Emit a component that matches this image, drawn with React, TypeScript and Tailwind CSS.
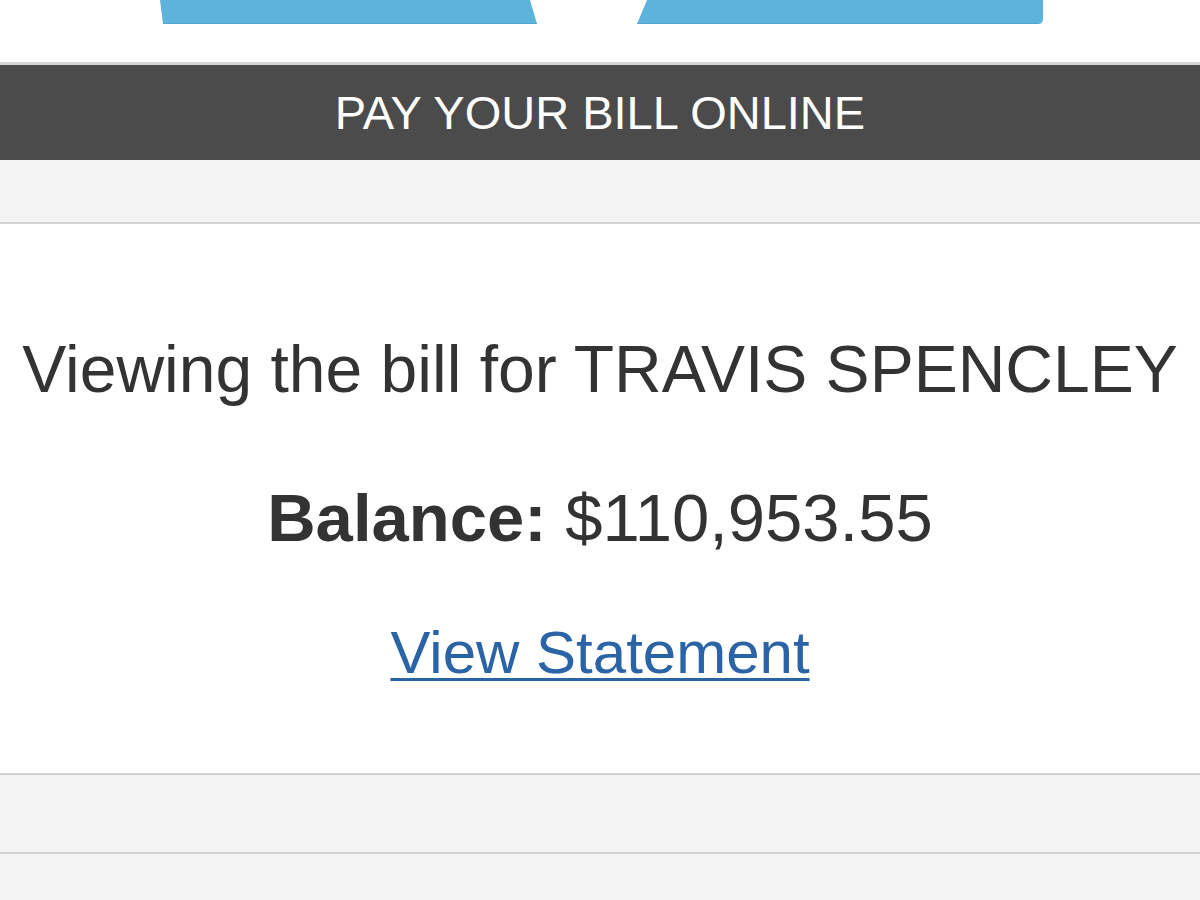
import React from "react"

// ─── Header art (cropped blue tabs at the top) ───────────────────────────────

function HeaderArt() {
  return (
    <svg width="1200" height="26" viewBox="0 0 1200 26" className="block">
      <polygon points="160,0 530,0 537,24 163,24" fill="#5cb3db" />
      <path d="M647 0 H1043 V19 Q1043 24 1038 24 H637 Z" fill="#5cb3db" />
      <line x1="163" y1="23.5" x2="537" y2="23.5" stroke="#55a6cc" strokeWidth="1" />
      <line x1="637" y1="23.5" x2="1038" y2="23.5" stroke="#55a6cc" strokeWidth="1" />
    </svg>
  )
}

// ─── App ─────────────────────────────────────────────────────────────────────

export default function App() {
  return (
    <div
      className="w-[1200px] h-[900px] flex flex-col bg-[#f3f3f3] overflow-hidden"
      style={{ fontFamily: '"Liberation Sans", Arial, Helvetica, sans-serif' }}
    >
      <div className="h-[62px] bg-white">
        <HeaderArt />
      </div>
      <div className="h-[3px] bg-[#d6d6d6]" />

      <div className="h-[95px] bg-[#4b4b4b] flex items-center justify-center">
        <span className="text-white text-[47px] leading-none">PAY YOUR BILL ONLINE</span>
      </div>

      <div className="h-[64px] bg-[#f3f3f3] border-b-2 border-[#d2d2d2]" />

      <div className="h-[549px] bg-white flex flex-col items-center text-[#333333]">
        <p className="mt-[112px] text-[66px] leading-[66px] whitespace-nowrap">
          Viewing the bill for TRAVIS SPENCLEY
        </p>
        <p className="mt-[82px] text-[67px] leading-[67px] whitespace-nowrap">
          <span className="font-bold">Balance:</span> $110,953.55
        </p>
        <a
          href="#"
          className="mt-[72px] text-[60px] leading-[60px] text-[#2b64a6] underline decoration-[3px] underline-offset-[5px]"
        >
          View Statement
        </a>
      </div>

      <div className="h-[2px] bg-[#d0d0d0]" />
      <div className="h-[77px] bg-[#f3f3f3]" />
      <div className="h-[2px] bg-[#d2d2d2]" />
      <div className="flex-1 bg-[#f3f3f3]" />
    </div>
  )
}
